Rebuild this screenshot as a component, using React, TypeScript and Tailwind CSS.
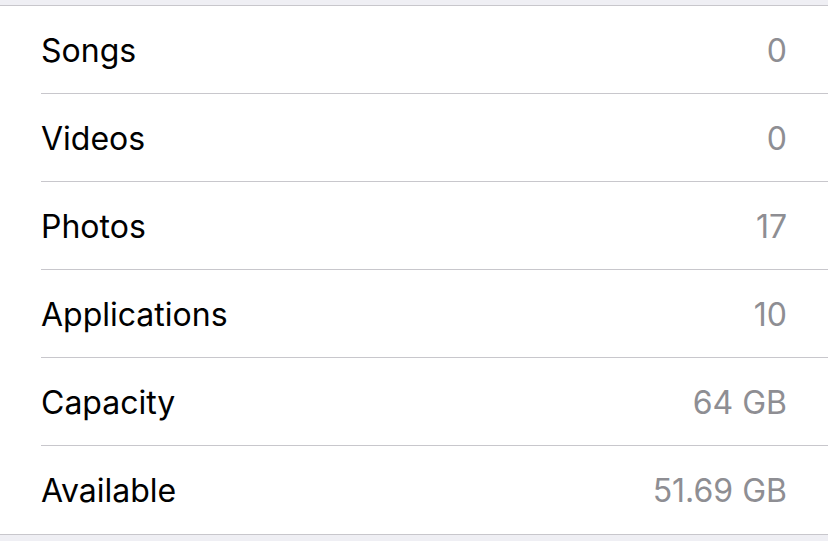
import React from 'react';

const rows = [
  { label: 'Songs', value: '0' },
  { label: 'Videos', value: '0' },
  { label: 'Photos', value: '17' },
  { label: 'Applications', value: '10' },
  { label: 'Capacity', value: '64 GB' },
  { label: 'Available', value: '51.69 GB' },
];

export default function App() {
  return (
    <div className="w-[828px] h-[541px] bg-[#efeff4] pt-[5px] font-['Inter',sans-serif] overflow-hidden">
      <div className="bg-white border-y border-[#c8c7cc] pl-[41px]">
        {rows.map((row, i) => (
          <div
            key={row.label}
            className={`flex items-center justify-between h-[88px] pt-[2px] pr-[41px] ${
              i < rows.length - 1 ? 'border-b border-[#c8c7cc]' : ''
            }`}
          >
            <span className="text-[32px] text-black">{row.label}</span>
            <span className="text-[32px] text-[#8e8e93]">{row.value}</span>
          </div>
        ))}
      </div>
    </div>
  );
}
